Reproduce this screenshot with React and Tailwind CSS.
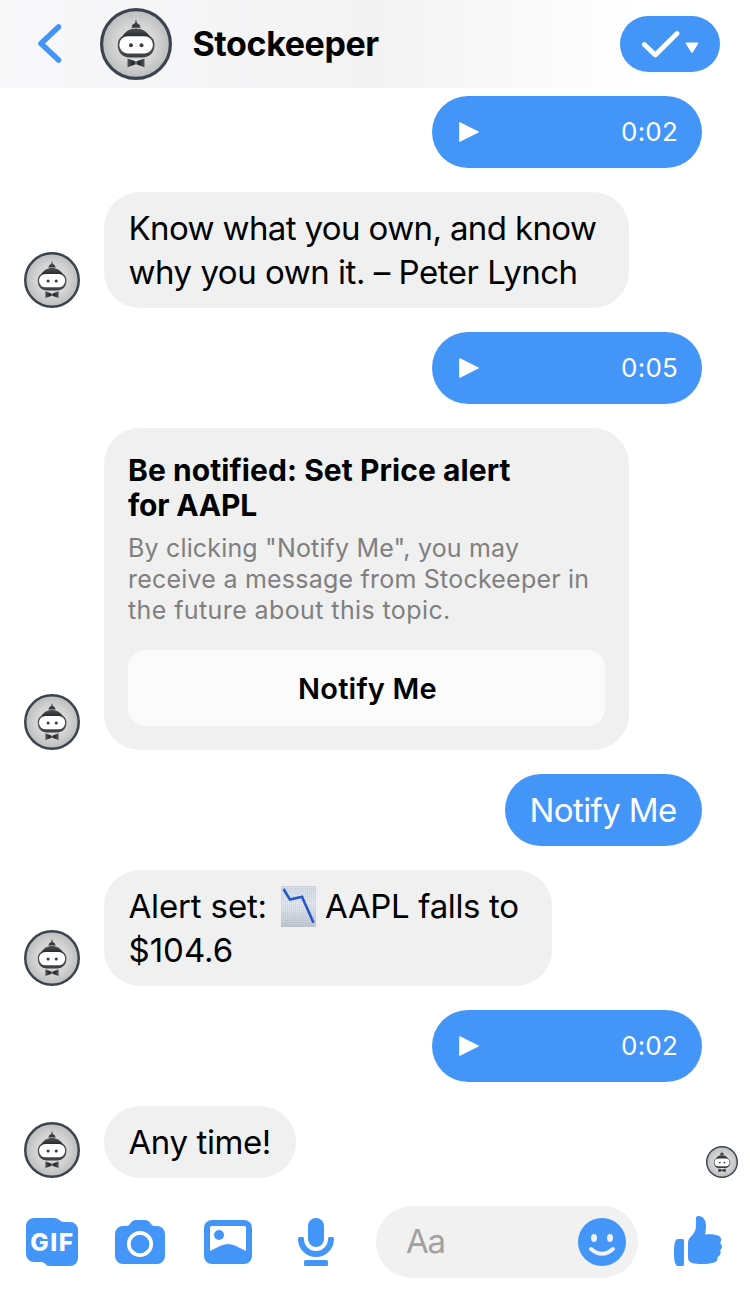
const messages = [
  { id: 1, type: 'audio', time: '0:02' },
  {
    id: 2,
    type: 'text',
    width: 'w-[525px]',
    lines: [
      { text: 'Know what you own, and know', cls: 'tracking-[-0.62px]' },
      { text: 'why you own it. – Peter Lynch', cls: 'tracking-[-0.48px]' },
    ],
  },
  { id: 3, type: 'audio', time: '0:05' },
  { id: 4, type: 'card' },
  { id: 5, type: 'reply', text: 'Notify Me' },
  { id: 6, type: 'alert' },
  { id: 7, type: 'audio', time: '0:02' },
  { id: 8, type: 'text', width: 'w-[192px]', lines: [{ text: 'Any time!', cls: 'tracking-[-0.4px]' }] },
]

const bubbleCls = 'rounded-[36px] bg-[#f0f0f0] pl-[24.5px] pr-6 py-3.5 text-[33px] leading-[44px] text-black'

function Avatar({ className }) {
  return (
    <svg viewBox="0 0 72 72" className={`shrink-0 ${className}`}>
      <defs>
        <radialGradient id="face-bg">
          <stop offset="0" stopColor="#e4e4e4" />
          <stop offset="0.6" stopColor="#d4d4d4" />
          <stop offset="1" stopColor="#bbbcbd" />
        </radialGradient>
        <linearGradient id="cap" x1="0" y1="0" x2="0" y2="1">
          <stop offset="0" stopColor="#505356" />
          <stop offset="0.25" stopColor="#2b2e31" />
          <stop offset="0.6" stopColor="#55585b" />
          <stop offset="1" stopColor="#3a3d40" />
        </linearGradient>
        <linearGradient id="bow" x1="0" x2="1">
          <stop offset="0" stopColor="#55585b" />
          <stop offset="0.35" stopColor="#222528" />
          <stop offset="0.5" stopColor="#6b6e70" />
          <stop offset="0.65" stopColor="#222528" />
          <stop offset="1" stopColor="#55585b" />
        </linearGradient>
      </defs>
      <circle cx="36" cy="36" r="34.4" fill="url(#face-bg)" stroke="#3b444e" strokeWidth="3.2" />
      <path d="M35.6 12.3h.8l.5 3c2 .4 3 2 3.4 3.6l.7.9h-10l.7-.9c.4-1.6 1.4-3.2 3.4-3.6z" fill="#3a3d40" />
      <path d="M36 20.5c6.500 0 10.500 3 13.700 7.500C53 30 54.600 33 54.600 37c0 7.500-5 12.500-12.500 12.500h-12.200C22.400 49.500 17.700 44.500 17.700 37c0-4 1.500-7 4.800-9C25.500 23.500 29.500 20.500 36 20.500z" fill="url(#cap)" />
      <rect x="19.4" y="28.2" width="33.4" height="17.2" rx="8.2" fill="#fff" />
      <circle cx="31" cy="37.3" r="2" fill="#3a3d40" />
      <circle cx="41.5" cy="37.3" r="2" fill="#3a3d40" />
      <path d="M27.5 50.5 36 53.6l8.5-3.1v8.7L36 56.2l-8.5 3z" fill="url(#bow)" />
    </svg>
  )
}

function ChartDown() {
  return (
    <svg viewBox="0 0 35 41" className="h-[41px] w-[35px] shrink-0">
      <defs>
        <linearGradient id="paper" x1="0" y1="0" x2="0" y2="1">
          <stop offset="0" stopColor="#d9dfe6" />
          <stop offset="0.45" stopColor="#e3ebf5" />
          <stop offset="1" stopColor="#c2c9d1" />
        </linearGradient>
        <pattern id="grid" width="2" height="2" patternUnits="userSpaceOnUse">
          <path d="M0 .5h2M.5 0v2" stroke="#8d99a8" strokeOpacity="0.12" />
        </pattern>
      </defs>
      <rect width="35" height="41" fill="url(#paper)" />
      <rect width="35" height="41" fill="url(#grid)" />
      <path d="M2.5 3 9 13.6 21 10.8l11.5 26" fill="none" stroke="#2458c8" strokeWidth="2.6" />
    </svg>
  )
}

function AudioBubble({ time }) {
  return (
    <div className="flex h-[72px] w-[270px] items-center justify-between self-end rounded-full bg-[#4495f8] pr-6 pl-[27px] text-white">
      <svg viewBox="0 0 20 20" className="size-5">
        <path d="M.8.8 19.3 10 .8 19.2z" fill="currentColor" stroke="currentColor" strokeWidth="1.2" strokeLinejoin="round" />
      </svg>
      <span className="text-[26px] leading-8 tracking-[0.2px]">{time}</span>
    </div>
  )
}

function BotRow({ children }) {
  return (
    <div className="flex items-end gap-6">
      <Avatar className="size-14" />
      {children}
    </div>
  )
}

function NotifyCard() {
  return (
    <div className="h-[322px] w-[525px] rounded-[36px] bg-[#f0f0f0] px-6 pt-[25px]">
      <h2 className="text-[30px] leading-[35px] font-bold whitespace-nowrap text-black">
        <span className="block tracking-[0.07px]">Be notified: Set Price alert</span>
        <span className="block tracking-[-0.2px]">for AAPL</span>
      </h2>
      <p className="mt-[10px] text-[25px] leading-[31px] whitespace-nowrap text-[#7f7f7f]">
        <span className="block tracking-[0.17px]">By clicking "Notify Me", you may</span>
        <span className="block tracking-[0.22px]">receive a message from Stockeeper in</span>
        <span className="block tracking-[0.4px]">the future about this topic.</span>
      </p>
      <button type="button" className="mt-6 h-[76px] w-[477px] rounded-[18px] bg-[#fbfbfb] pt-0.5 pl-0.5 text-[29px] font-semibold tracking-[0.2px] text-black">
        Notify Me
      </button>
    </div>
  )
}

function Message({ message }) {
  if (message.type === 'audio') return <AudioBubble time={message.time} />
  if (message.type === 'reply') {
    return (
      <div className="flex h-[72px] w-[197px] items-center self-end rounded-full bg-[#4495f8] pt-0.5 pl-[24.5px] text-[33px] tracking-[-0.6px] whitespace-nowrap text-white">
        {message.text}
      </div>
    )
  }
  if (message.type === 'card') {
    return <BotRow><NotifyCard /></BotRow>
  }
  if (message.type === 'alert') {
    return (
      <BotRow>
        <div className={`${bubbleCls} w-[448px] whitespace-nowrap`}>
          <div className="flex h-11 items-center">
            <span className="w-[152.5px] tracking-[-0.15px]">Alert set:</span>
            <ChartDown />
            <span className="ml-[9px] tracking-[-0.35px]">AAPL falls to</span>
          </div>
          <span className="block">$104.6</span>
        </div>
      </BotRow>
    )
  }
  return (
    <BotRow>
      <div className={`${bubbleCls} ${message.width} whitespace-nowrap`}>
        {message.lines.map((l) => <span key={l.text} className={`block ${l.cls}`}>{l.text}</span>)}
      </div>
    </BotRow>
  )
}

function Header() {
  return (
    <header className="flex h-[88px] items-center bg-linear-to-r from-[#f8f8fa] via-[#f3f3f4] via-50% to-white to-86% pr-[30px] pl-[37px]">
      <svg viewBox="0 0 26 42" className="h-[42px] w-[26px]">
        <path d="M21.5 4 4 20.5 21.5 37" fill="none" stroke="#4495f8" strokeWidth="5.6" strokeLinecap="round" strokeLinejoin="round" />
      </svg>
      <Avatar className="ml-[37px] size-[72px]" />
      <h1 className="ml-[20.5px] text-[34px] leading-[44px] font-bold tracking-[-0.4px] text-black">Stockeeper</h1>
      <button type="button" aria-label="Done" className="ml-auto flex h-14 w-[100px] items-center rounded-[28px] bg-[#4495f8] pl-[21px] text-white">
        <svg viewBox="0 0 58 30" className="h-[30px] w-[58px]">
          <path d="M3.3 15.5 14.3 26 36 4.5" fill="none" stroke="currentColor" strokeWidth="4.8" strokeLinecap="round" strokeLinejoin="round" />
          <path d="M45.5 14.3h11l-5.5 8.7z" fill="currentColor" stroke="currentColor" strokeWidth="1.6" strokeLinejoin="round" />
        </svg>
      </button>
    </header>
  )
}

function Composer() {
  return (
    <footer className="mt-7 flex h-[72px] items-center pl-[26px] text-[#4495f8]">
      <svg viewBox="0 0 52 48" className="h-12 w-[52px]">
        <path d="M8 0h20c5 0 6 4 10 4h6a8 8 0 0 1 8 8v28a8 8 0 0 1-8 8H24c-5 0-4-4-9-4H8a8 8 0 0 1-8-8V8a8 8 0 0 1 8-8z" fill="currentColor" />
        <text x="25.7" y="32.7" textAnchor="middle" textLength="43" fontFamily="Inter" fontSize="24.5" fontWeight="800" fill="#fff">GIF</text>
      </svg>
      <svg viewBox="0 0 50 44" className="ml-[37px] h-11 w-[50px]">
        <path d="M8 6h3.5C16 6 15 0 21 0h9c6 0 5 6 9.5 6H42a8 8 0 0 1 8 8v22a8 8 0 0 1-8 8H8a8 8 0 0 1-8-8V14a8 8 0 0 1 8-8z" fill="currentColor" />
        <circle cx="25" cy="24" r="11.2" fill="none" stroke="#fff" strokeWidth="3.7" />
      </svg>
      <svg viewBox="0 0 48 44" className="ml-[39px] h-11 w-12">
        <rect width="48" height="44" rx="8" fill="currentColor" />
        <path d="M7.5 6h33A1.5 1.5 0 0 1 42 7.5V31L31 25.6Q24 22.5 17 25.6L6 31V7.5A1.5 1.5 0 0 1 7.5 6z" fill="#fff" />
        <circle cx="15" cy="15" r="5" fill="currentColor" />
      </svg>
      <svg viewBox="0 0 36 48" className="ml-[46px] h-12 w-9">
        <rect x="10" width="16" height="29" rx="8" fill="currentColor" />
        <path d="M1.5 19h3Q6 19 6 20.5V21a12 12 0 0 0 24 0v-.5Q30 19 31.5 19h3Q36 19 36 20.5V21a18 18 0 0 1-36 0v-.5Q0 19 1.5 19z" fill="currentColor" />
        <rect x="6" y="42" width="24" height="6" rx="1.5" fill="currentColor" />
      </svg>
      <div className="ml-[42px] flex h-[72px] w-[262px] items-center justify-between rounded-full bg-[#f1f1f1] pr-3 pl-[30px]">
        <span className="text-[33px] tracking-[-1.2px] text-[#a1a1a1]">Aa</span>
        <svg viewBox="0 0 48 48" className="size-12">
          <circle cx="24" cy="24" r="24" fill="currentColor" />
          <ellipse cx="16" cy="20" rx="3" ry="4" fill="#f1f1f1" />
          <ellipse cx="32" cy="20" rx="3" ry="4" fill="#f1f1f1" />
          <path d="M13 31Q24 40.5 35 31" fill="none" stroke="#f1f1f1" strokeWidth="4" strokeLinecap="round" />
        </svg>
      </div>
      <svg viewBox="0 0 48 50" className="mb-0.5 ml-9 h-[50px] w-12">
        <path d="M4 23h4.5Q10 23 10 24.5v24Q10 50 8.5 50H4c-3 0-4-5-4-13.5S1 23 4 23z" fill="currentColor" />
        <path d="M22 2c.3-1.5 1-2 2.5-2 5 0 7 4 7.5 9 .2 4-.5 6.5-1 9.5 5-.5 10-.5 14 1.5 2.5 1.5 3 4.5 1 7 2.5 2 2.5 5 .2 7.3 1.2 3-.2 5.3-2.7 6.700.5 3-1 5-4 5.7-6 1.6-16 1.6-21 .3-3-.7-4.500-2.500-4.500-5.500V27c0-5.500 5-7 7.200-12.500C22.600 10.500 21.500 5.500 22 2z" fill="currentColor" />
      </svg>
    </footer>
  )
}

export default function App() {
  return (
    <div className="relative flex h-[1294px] w-[750px] flex-col overflow-hidden bg-white font-['Inter',sans-serif]">
      <Header />
      <main className="flex flex-col gap-6 pt-2 pr-12 pl-6">
        {messages.map((m) => <Message key={m.id} message={m} />)}
      </main>
      <Avatar className="absolute top-[1146px] left-[706px] size-8" />
      <Composer />
    </div>
  )
}
